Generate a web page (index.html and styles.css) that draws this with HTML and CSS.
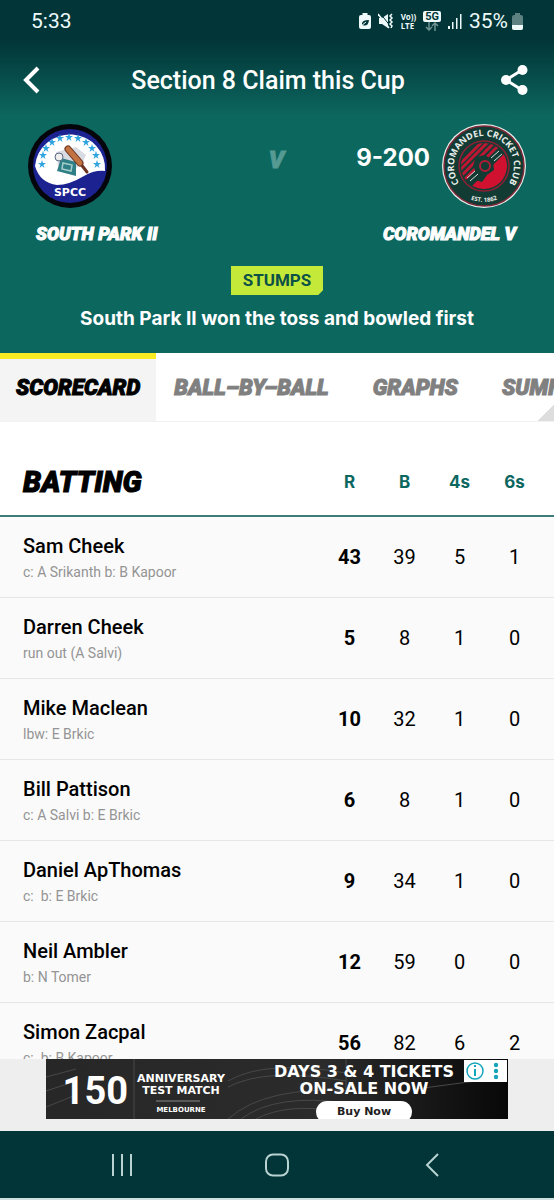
FILE: index.html
```html
<!DOCTYPE html>
<html lang="en">
<head>
  <meta charset="UTF-8">
  <meta name="viewport" content="width=device-width, initial-scale=1.0">
  <title>Section 8 Claim this Cup</title>
  <link rel="stylesheet" href="styles.css">
</head>
<body>

<header class="match-header">
  <div class="status-bar">
    <span class="clock">5:33</span>
    <div class="status-icons">
      <svg width="12" height="18" viewBox="0 0 12 18">
        <path d="M3.500 1h5v2H10a2 2 0 0 1 2 2v10a2 2 0 0 1-2 2H2a2 2 0 0 1-2-2V5a2 2 0 0 1 2-2h1.500z" fill="#eefafa"/>
        <path d="M3 13q-1-5 7-5-.5 6-5 5.500z" fill="#023538"/>
        <path d="M2 14l5-4" stroke="#eefafa"/>
      </svg>
      <svg class="icon-mute" width="16" height="18" viewBox="0 0 16 18" fill="none" stroke="#eefafa">
        <path d="M1 6h3l6-4v14l-6-4H1z" fill="#eefafa" stroke="none"/>
        <path d="M2 1l11 14" stroke="#023538"/>
        <path d="M0 2l11 14" stroke-width="1.500"/>
        <path d="M14 2l-2 2 2 2-2 2 2 2-2 2 2 2-1 2" stroke-width="1.500"/>
      </svg>
      <span class="volte">Vo))<br>LTE</span>
      <span class="five-g"><b>5G</b>
        <svg width="14" height="9" viewBox="0 0 14 9" fill="none" stroke="#6e9393" stroke-width="1.500"><path d="M4 0v8M1 5l3 3 3-3M10 9V1M7 4l3-3 3 3"/></svg>
      </span>
      <svg width="14" height="16" viewBox="0 0 14 16" fill="#eefafa"><path d="M0 13h2v3H0zM4 9h1.500v7H4zM8 5h1.500v11H8zM12 1h1.500v15H12z"/></svg>
      <span class="charge">35%</span>
      <svg class="battery" width="11" height="17" viewBox="0 0 11 17">
        <path d="M3 0h5v2h1a2 2 0 0 1 2 2v11a2 2 0 0 1-2 2H2a2 2 0 0 1-2-2V4a2 2 0 0 1 2-2h1z" fill="#5d8080"/>
        <path d="M0 12h11v3a2 2 0 0 1-2 2H2a2 2 0 0 1-2-2z" fill="#eefafa"/>
      </svg>
    </div>
  </div>

  <div class="title-bar">
    <button class="icon-button" aria-label="Back">
      <svg width="18" height="28" viewBox="0 0 18 28" fill="none" stroke="#fff" stroke-width="4"><path d="M16 2L4 14l12 12"/></svg>
    </button>
    <h1>Section 8 Claim this Cup</h1>
    <button class="icon-button" aria-label="Share">
      <svg width="28" height="32" viewBox="0 0 28 32" fill="#fff"><path d="M22 6L6 16l16 10" fill="none" stroke="#fff" stroke-width="3"/><circle cx="22.500" cy="6" r="5"/><circle cx="6" cy="16" r="5"/><circle cx="22.500" cy="26" r="5"/></svg>
    </button>
  </div>

  <div class="teams">
    <svg class="badge" viewBox="0 0 84 84">
      <defs>
        <path id="star" d="M0-4l1 3h3L1.500 1l1 3L0 2l-2.500 2 1-3L-4-1h3z"/>
      </defs>
      <circle cx="42" cy="42" r="42" fill="#05060b"/>
      <circle cx="42" cy="42" r="37" fill="#1c2390"/>
      <path d="M7 42A35 34 0 0 1 77 47Q66 46 56 52 41 61 29 61 12 59 7 42z" fill="#fff"/>
      <g fill="#2fa4e0">
        <use href="#star" x="14" y="40"/><use href="#star" x="15" y="31"/><use href="#star" x="18" y="24"/>
        <use href="#star" x="24" y="18"/><use href="#star" x="32" y="14"/><use href="#star" x="41" y="13"/>
        <use href="#star" x="50" y="14"/><use href="#star" x="58" y="18"/><use href="#star" x="64" y="24"/>
        <use href="#star" x="68" y="31"/><use href="#star" x="69" y="40"/>
      </g>
      <path d="M28 28l20-5 10 8-4 9-12 8-12-6z" fill="#d8dbe2"/>
      <path d="M33 34l15 4 0 14-19-5z" fill="#2f7f86"/>
      <path d="M35 39l9 2-1 6-9-2z" fill="none" stroke="#a7d0cc" stroke-width="1.500"/>
      <circle cx="31" cy="33" r="4" fill="#eee" stroke="#596783"/>
      <path d="M40 25l12 14" stroke="#6b3320" stroke-width="7" stroke-linecap="round"/>
      <path d="M52 39l7 9" stroke="#6b3320" stroke-width="3" stroke-linecap="round"/>
      <path d="M40 25l12 14" stroke="#c17442" stroke-width="5" stroke-linecap="round"/>
      <text x="42" y="72" class="spcc-text">SPCC</text>
    </svg>
    <span class="versus">V</span>
    <strong class="score">9-200</strong>
    <svg class="badge" viewBox="0 0 84 84">
      <defs>
        <path id="ring" d="M19 61.300A30 30 0 1 1 65 61.300"/>
        <path id="ringBottom" d="M6 42a36 36 0 0 0 72 0"/>
        <clipPath id="disc"><circle cx="42" cy="42" r="23"/></clipPath>
      </defs>
      <circle cx="42" cy="42" r="42" fill="#e6efeb"/>
      <circle cx="42" cy="42" r="40" fill="#123b33" stroke="#7d2838" stroke-width="1.500"/>
      <circle cx="42" cy="42" r="25" fill="#123b33" stroke="#8e2035" stroke-width="1.500"/>
      <g clip-path="url(#disc)">
        <path d="M28 64L66 26v40H30z" fill="#d0112f"/>
        <path d="M18 40l24-24M18 46l30-30M20 51l33-33M23 55l34-34" stroke="#bd1733" stroke-width="3"/>
      </g>
      <path d="M34 33l9-2 8 6 1 9-7 5-5 7-7-2 1-8-3-6z" fill="#123b33"/>
      <path d="M25 54l8-7M28 57l8-7M49 34l8-7M52 37l8-7" stroke="#ddd"/>
      <circle cx="43" cy="42" r="5" fill="none" stroke="#b01c37" stroke-width="2"/>
      <text class="ring-text"><textPath href="#ring" startOffset="50%">COROMANDEL CRICKET CLUB</textPath></text>
      <text class="ring-year"><textPath href="#ringBottom" startOffset="50%">EST. 1862</textPath></text>
    </svg>
  </div>

  <div class="team-names">
    <span>SOUTH PARK II</span>
    <span>COROMANDEL V</span>
  </div>

  <span class="match-state">STUMPS</span>
  <p class="toss">South Park II won the toss and bowled first</p>
</header>

<nav class="tabs">
  <button class="tab active">SCORECARD</button>
  <button class="tab">BALL–BY–BALL</button>
  <button class="tab">GRAPHS</button>
  <button class="tab">SUMMARY</button>
</nav>

<main class="scorecard">
  <table>
    <thead>
      <tr><th class="batting">BATTING</th><th>R</th><th>B</th><th>4s</th><th>6s</th><th class="edge"></th></tr>
    </thead>
    <tbody>
      <tr><td>Sam Cheek<small>c: A Srikanth b: B Kapoor</small></td><td>43</td><td>39</td><td>5</td><td>1</td><td></td></tr>
      <tr><td>Darren Cheek<small>run out (A Salvi)</small></td><td>5</td><td>8</td><td>1</td><td>0</td><td></td></tr>
      <tr><td>Mike Maclean<small>lbw: E Brkic</small></td><td>10</td><td>32</td><td>1</td><td>0</td><td></td></tr>
      <tr><td>Bill Pattison<small>c: A Salvi b: E Brkic</small></td><td>6</td><td>8</td><td>1</td><td>0</td><td></td></tr>
      <tr><td>Daniel ApThomas<small>c: &nbsp;b: E Brkic</small></td><td>9</td><td>34</td><td>1</td><td>0</td><td></td></tr>
      <tr><td>Neil Ambler<small>b: N Tomer</small></td><td>12</td><td>59</td><td>0</td><td>0</td><td></td></tr>
      <tr><td>Simon Zacpal<small>c: &nbsp;b: B Kapoor</small></td><td>56</td><td>82</td><td>6</td><td>2</td><td></td></tr>
    </tbody>
  </table>
</main>

<aside class="ad-strip">
  <div class="ad">
    <svg class="ad-stadium" viewBox="0 0 462 60" preserveAspectRatio="xMidYMid slice" fill="none" stroke="#484848">
      <path d="M0 18l30-8M0 32l30-10M0 48l30-12M88 0v60M182 22Q220 0 300 14M182 28Q220 8 300 22M182 60Q220 26 310 32M195 60Q230 34 300 44M210 60Q240 44 290 52M300 0v30M370 30l60-8"/>
      <path d="M110 42h44" stroke="#888"/>
    </svg>
    <span class="ad-number">150</span>
    <div class="ad-event">ANNIVERSARY<br>TEST MATCH<small>MELBOURNE</small></div>
    <div class="ad-offer">
      <span>DAYS 3 &amp; 4 TICKETS<br>ON-SALE NOW</span>
      <button class="buy">Buy Now</button>
    </div>
    <button class="ad-choices" aria-label="Ad choices">
      <svg width="43" height="22" viewBox="0 0 43 22" fill="#14a5bd"><circle cx="11" cy="11" r="8" fill="none" stroke="#14a5bd" stroke-width="1.500"/><path d="M10 9h2v7h-2zM10 5h2v2h-2z"/><circle cx="32" cy="5" r="2.200"/><circle cx="32" cy="11" r="2.200"/><circle cx="32" cy="17" r="2.200"/></svg>
    </button>
  </div>
</aside>

<nav class="system-nav">
  <button aria-label="Recent apps"><svg width="24" height="24" viewBox="0 0 24 24"><path d="M3 1v22M12 1v22M21 1v22"/></svg></button>
  <button aria-label="Home"><svg width="24" height="24" viewBox="0 0 24 24"><rect x="1" y="1.500" width="22" height="21" rx="7"/></svg></button>
  <button aria-label="Back"><svg width="24" height="24" viewBox="0 0 24 24"><path d="M18 1L7 12l11 11"/></svg></button>
</nav>

</body>
</html>
```
FILE: styles.css
```css
* {
  box-sizing: border-box;
}

body {
  margin: 0;
  height: 100vh;
  display: flex;
  flex-direction: column;
  overflow: hidden;
  font-family: Roboto, sans-serif;
  background: #fff;
  color: #000;
}

button {
  padding: 0;
  border: none;
  background: none;
  font-family: inherit;
  cursor: pointer;
}

svg {
  display: block;
}

/* Match header */
.match-header {
  display: flex;
  flex-direction: column;
  align-items: center;
  padding-bottom: 22px;
  background: linear-gradient(#023538 0, #023538 40px, #0c675f 116px);
  color: #fff;
}

.status-bar {
  width: 100%;
  height: 42px;
  padding: 0 31px;
  display: flex;
  justify-content: space-between;
  align-items: center;
  color: #eefafa;
}

.clock,
.charge {
  font-size: 21px;
}

.status-icons {
  display: flex;
  align-items: center;
  gap: 7px;
}

.battery {
  margin-left: -3px;
}

.volte {
  font: bold 8px/9px "Noto Sans", sans-serif;
}

.five-g {
  display: flex;
  flex-direction: column;
  align-items: center;
}

.five-g b {
  padding: 0 2px;
  border-radius: 2px;
  background: #eefafa;
  color: #023538;
  font-size: 11px;
  line-height: 11px;
}

.title-bar {
  width: 100%;
  height: 76px;
  padding: 0 26px 0 22px;
  display: flex;
  justify-content: space-between;
  align-items: center;
}

.title-bar h1 {
  margin: 0;
  padding: 2px 4px 0 0;
  font: 500 25px/32px Roboto, sans-serif;
}

.teams {
  width: 100%;
  height: 96px;
  padding: 6px 28px;
  display: flex;
  align-items: center;
}

.badge {
  width: 84px;
  height: 84px;
}

.versus {
  margin: 0 0 12px auto;
  color: #559a93;
  font: italic 900 24px/28px Roboto, sans-serif;
  -webkit-text-stroke: 1px;
}

.score {
  margin: 0 12px 16px 72px;
  font: 700 24px/28px Inter, sans-serif;
}

.spcc-text {
  fill: #fff;
  font: bold 11px "DejaVu Sans", sans-serif;
  text-anchor: middle;
}

.ring-text {
  fill: #e9efec;
  font: bold 9px "Open Sans", sans-serif;
  text-anchor: middle;
}

.ring-year {
  fill: #e9efec;
  font: bold 6px "Open Sans", sans-serif;
  text-anchor: middle;
}

.team-names {
  width: 100%;
  padding: 8px 38px 0 36px;
  display: flex;
  justify-content: space-between;
  font: italic 900 18px/24px Roboto, sans-serif;
  -webkit-text-stroke: 1px;
}

.match-state {
  margin-top: 20px;
  padding: 0 12px;
  background: #c5e938;
  clip-path: polygon(0 0, 100% 0, 100% calc(100% - 5px), calc(100% - 5px) 100%, 0 100%);
  color: #0b5147;
  font-size: 17px;
  font-weight: 700;
  line-height: 29px;
}

.toss {
  margin: 12px 0 0;
  font: 700 19px/24px Inter, sans-serif;
}

/* Tabs */
.tabs {
  position: relative;
  flex: none;
  height: 69px;
  display: flex;
  overflow: hidden;
  border-bottom: 1px solid #f2f2f2;
}

.tabs::after {
  content: "";
  position: absolute;
  right: 0;
  bottom: 0;
  width: 17px;
  height: 17px;
  background: linear-gradient(135deg, transparent 50%, #ddd 50%);
}

.tab {
  flex: none;
  padding: 0 22px 4px;
  border-top: 6px solid transparent;
  color: #808080;
  font: italic 900 22px/28px Roboto, sans-serif;
  -webkit-text-stroke: 1px;
}

.tab.active {
  padding: 0 16px 4px;
  border-top-color: #f9ec22;
  background: #f4f4f4;
  color: #000;
}

.tab.active + .tab {
  padding-left: 18px;
}

/* Batting table */
.scorecard {
  flex: 1;
  min-height: 0;
  overflow: hidden;
  background: #fafafa;
}

table {
  width: 100%;
  table-layout: fixed;
  border-spacing: 0;
}

th,
td {
  width: 55px;
  padding: 0;
  text-align: center;
}

th {
  height: 95px;
  padding-top: 26px;
  border-bottom: 2px solid #3d7f78;
  background: #fff;
  color: #0c675f;
  font: 700 17px/24px Inter, sans-serif;
}

th.edge {
  width: 12px;
}

td {
  height: 81px;
  border-bottom: 1px solid #e6e6e6;
  font-size: 20px;
  line-height: 24px;
}

th:first-child,
td:first-child {
  width: auto;
  padding-left: 23px;
  text-align: left;
  font-weight: 500;
}

td:first-child {
  padding-top: 4px;
}

th.batting {
  color: #000;
  font: italic 900 29px/32px Roboto, sans-serif;
  -webkit-text-stroke: 1px;
}

td:nth-child(2) {
  font-weight: 700;
}

td small {
  display: block;
  margin-top: 2px;
  color: #949494;
  font-size: 14px;
  font-weight: 400;
}

/* Advertisement */
.ad-strip {
  flex: none;
  height: 72px;
  display: flex;
  justify-content: center;
  align-items: flex-start;
  background: #eee;
}

.ad {
  position: relative;
  width: 462px;
  height: 60px;
  display: flex;
  overflow: hidden;
  background: linear-gradient(90deg, #272727, #2b2b2b 60%, #080808);
  color: #fff;
}

.ad-stadium {
  position: absolute;
  inset: 0;
  width: 100%;
  height: 100%;
}

.ad-number,
.ad-event,
.ad-offer {
  position: relative;
}

.ad-number {
  width: 88px;
  padding-right: 6px;
  text-align: right;
  font: bold 38px/64px "Liberation Sans Narrow", Roboto, sans-serif;
}

.ad-event {
  width: 94px;
  padding-top: 14px;
  text-align: center;
  font: bold 11px/12px "DejaVu Sans", sans-serif;
}

.ad-event small {
  display: block;
  margin-top: 7px;
  font-size: 7px;
}

.ad-offer {
  flex: 1;
  display: flex;
  flex-direction: column;
  align-items: center;
  padding: 4px 46px 0 38px;
  text-align: center;
  font: bold 16px/17px "DejaVu Sans", sans-serif;
  white-space: nowrap;
}

.buy {
  flex: none;
  width: 96px;
  height: 22px;
  margin-top: 4px;
  border-radius: 11px;
  background: #fff;
  color: #222;
  font: bold 11px/20px "DejaVu Sans", sans-serif;
}

.ad-choices {
  position: absolute;
  top: 1px;
  right: 1px;
  background: #fff;
}

/* Phone navigation */
.system-nav {
  flex: none;
  height: 69px;
  padding: 0 44px;
  display: flex;
  align-items: center;
  border-bottom: 2px solid #cfe0e0;
  background: #023538;
}

.system-nav button {
  flex: 1;
  display: flex;
  justify-content: center;
}

.system-nav svg {
  fill: none;
  stroke: #b9d2d2;
  stroke-width: 2;
}
```
